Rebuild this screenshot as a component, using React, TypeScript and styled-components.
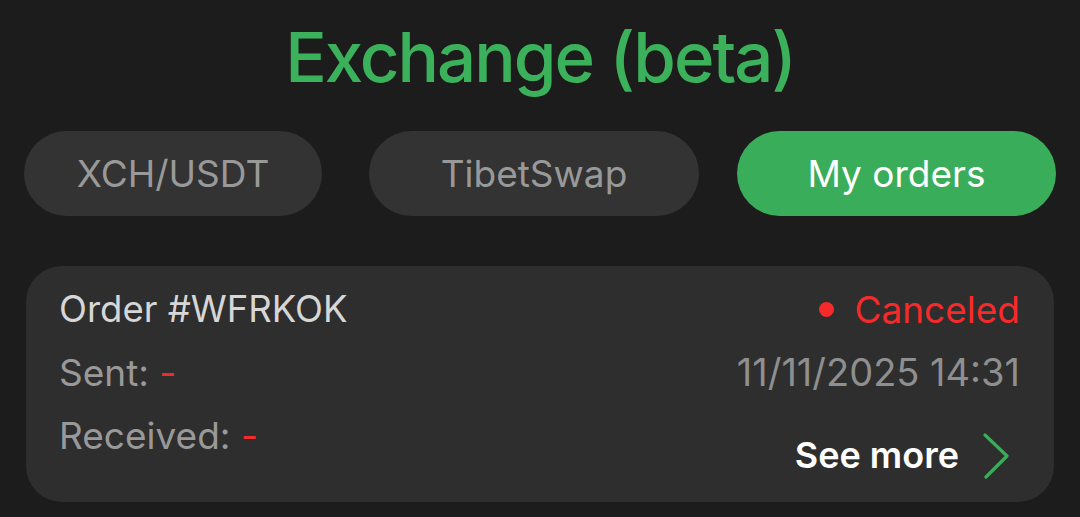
import React from "react";
import styled, { createGlobalStyle } from "styled-components";

const Global = createGlobalStyle`
  html, body { margin: 0; padding: 0; background: #1c1c1c; }
  body { font-family: Inter, "Noto Sans", sans-serif; -webkit-font-smoothing: antialiased; }
`;

const Page = styled.div`
  display: flex;
  flex-direction: column;
  padding: 16px 24px 0 24px;
  box-sizing: border-box;
  width: 1080px;
`;

const Title = styled.h1`
  margin: 0;
  text-align: center;
  color: #3cb15c;
  font-size: 69px;
  font-weight: 500;
  line-height: 83px;
  letter-spacing: -2px;
`;

const Tabs = styled.div`
  display: flex;
  margin-top: 32px;
`;

const Tab = styled.button<{ $active?: boolean; $width: number; $gap?: number }>`
  width: ${(p) => p.$width}px;
  margin-left: ${(p) => p.$gap ?? 0}px;
  height: 85px;
  border: none;
  border-radius: 43px;
  background: ${(p) => (p.$active ? "#3aad5a" : "#333333")};
  color: ${(p) => (p.$active ? "#ffffff" : "#999999")};
  font-family: inherit;
  font-size: 37px;
  font-weight: 400;
  padding: 0;
  cursor: pointer;
`;

const Card = styled.div`
  margin: 50px 2px 0 2px;
  background: #2e2e2e;
  border-radius: 36px;
  padding: 12px 34px 15px 33px;
  display: flex;
  justify-content: space-between;
`;

const Column = styled.div<{ $end?: boolean }>`
  display: flex;
  flex-direction: column;
  align-items: ${(p) => (p.$end ? "flex-end" : "flex-start")};
`;

const Line = styled.div<{ $color?: string; $size?: number }>`
  font-size: ${(p) => p.$size ?? 37}px;
  line-height: 63px;
  color: ${(p) => p.$color || "#999999"};
  display: flex;
  align-items: center;
`;

const Dash = styled.span`
  color: #f02b2b;
`;

const Dot = styled.span`
  width: 15px;
  height: 15px;
  border-radius: 50%;
  background: #f52a2a;
  margin-right: 20px;
`;

const SeeMore = styled.a`
  margin-top: 20px;
  display: flex;
  align-items: center;
  font-size: 36px;
  line-height: 63px;
  font-weight: 600;
  color: #ffffff;
  text-decoration: none;
  gap: 24px;
`;

export default function App() {
  return (
    <>
      <Global />
      <Page>
        <Title>Exchange (beta)</Title>
        <Tabs>
          <Tab $width={298}>XCH/USDT</Tab>
          <Tab $width={330} $gap={47}>TibetSwap</Tab>
          <Tab $width={319} $gap={38} $active>My orders</Tab>
        </Tabs>
        <Card>
          <Column>
            <Line $color="#d6d6d6" $size={36.5}>Order #WFRKOK</Line>
            <Line>
              Sent:&nbsp;<Dash>-</Dash>
            </Line>
            <Line>
              Received:&nbsp;<Dash>-</Dash>
            </Line>
          </Column>
          <Column $end>
            <Line $color="#f52a2a">
              <Dot />
              Canceled
            </Line>
            <Line $size={38} $color="#8f8f8f">11/11/2025 14:31</Line>
            <SeeMore href="#">
              See more
              <svg width="37" height="48" viewBox="0 0 37 48">
                <polyline
                  points="2,3 24,24 3,45"
                  fill="none"
                  stroke="#3aad5a"
                  strokeWidth="3.2"
                  strokeLinecap="round"
                  strokeLinejoin="round"
                />
              </svg>
            </SeeMore>
          </Column>
        </Card>
      </Page>
    </>
  );
}
